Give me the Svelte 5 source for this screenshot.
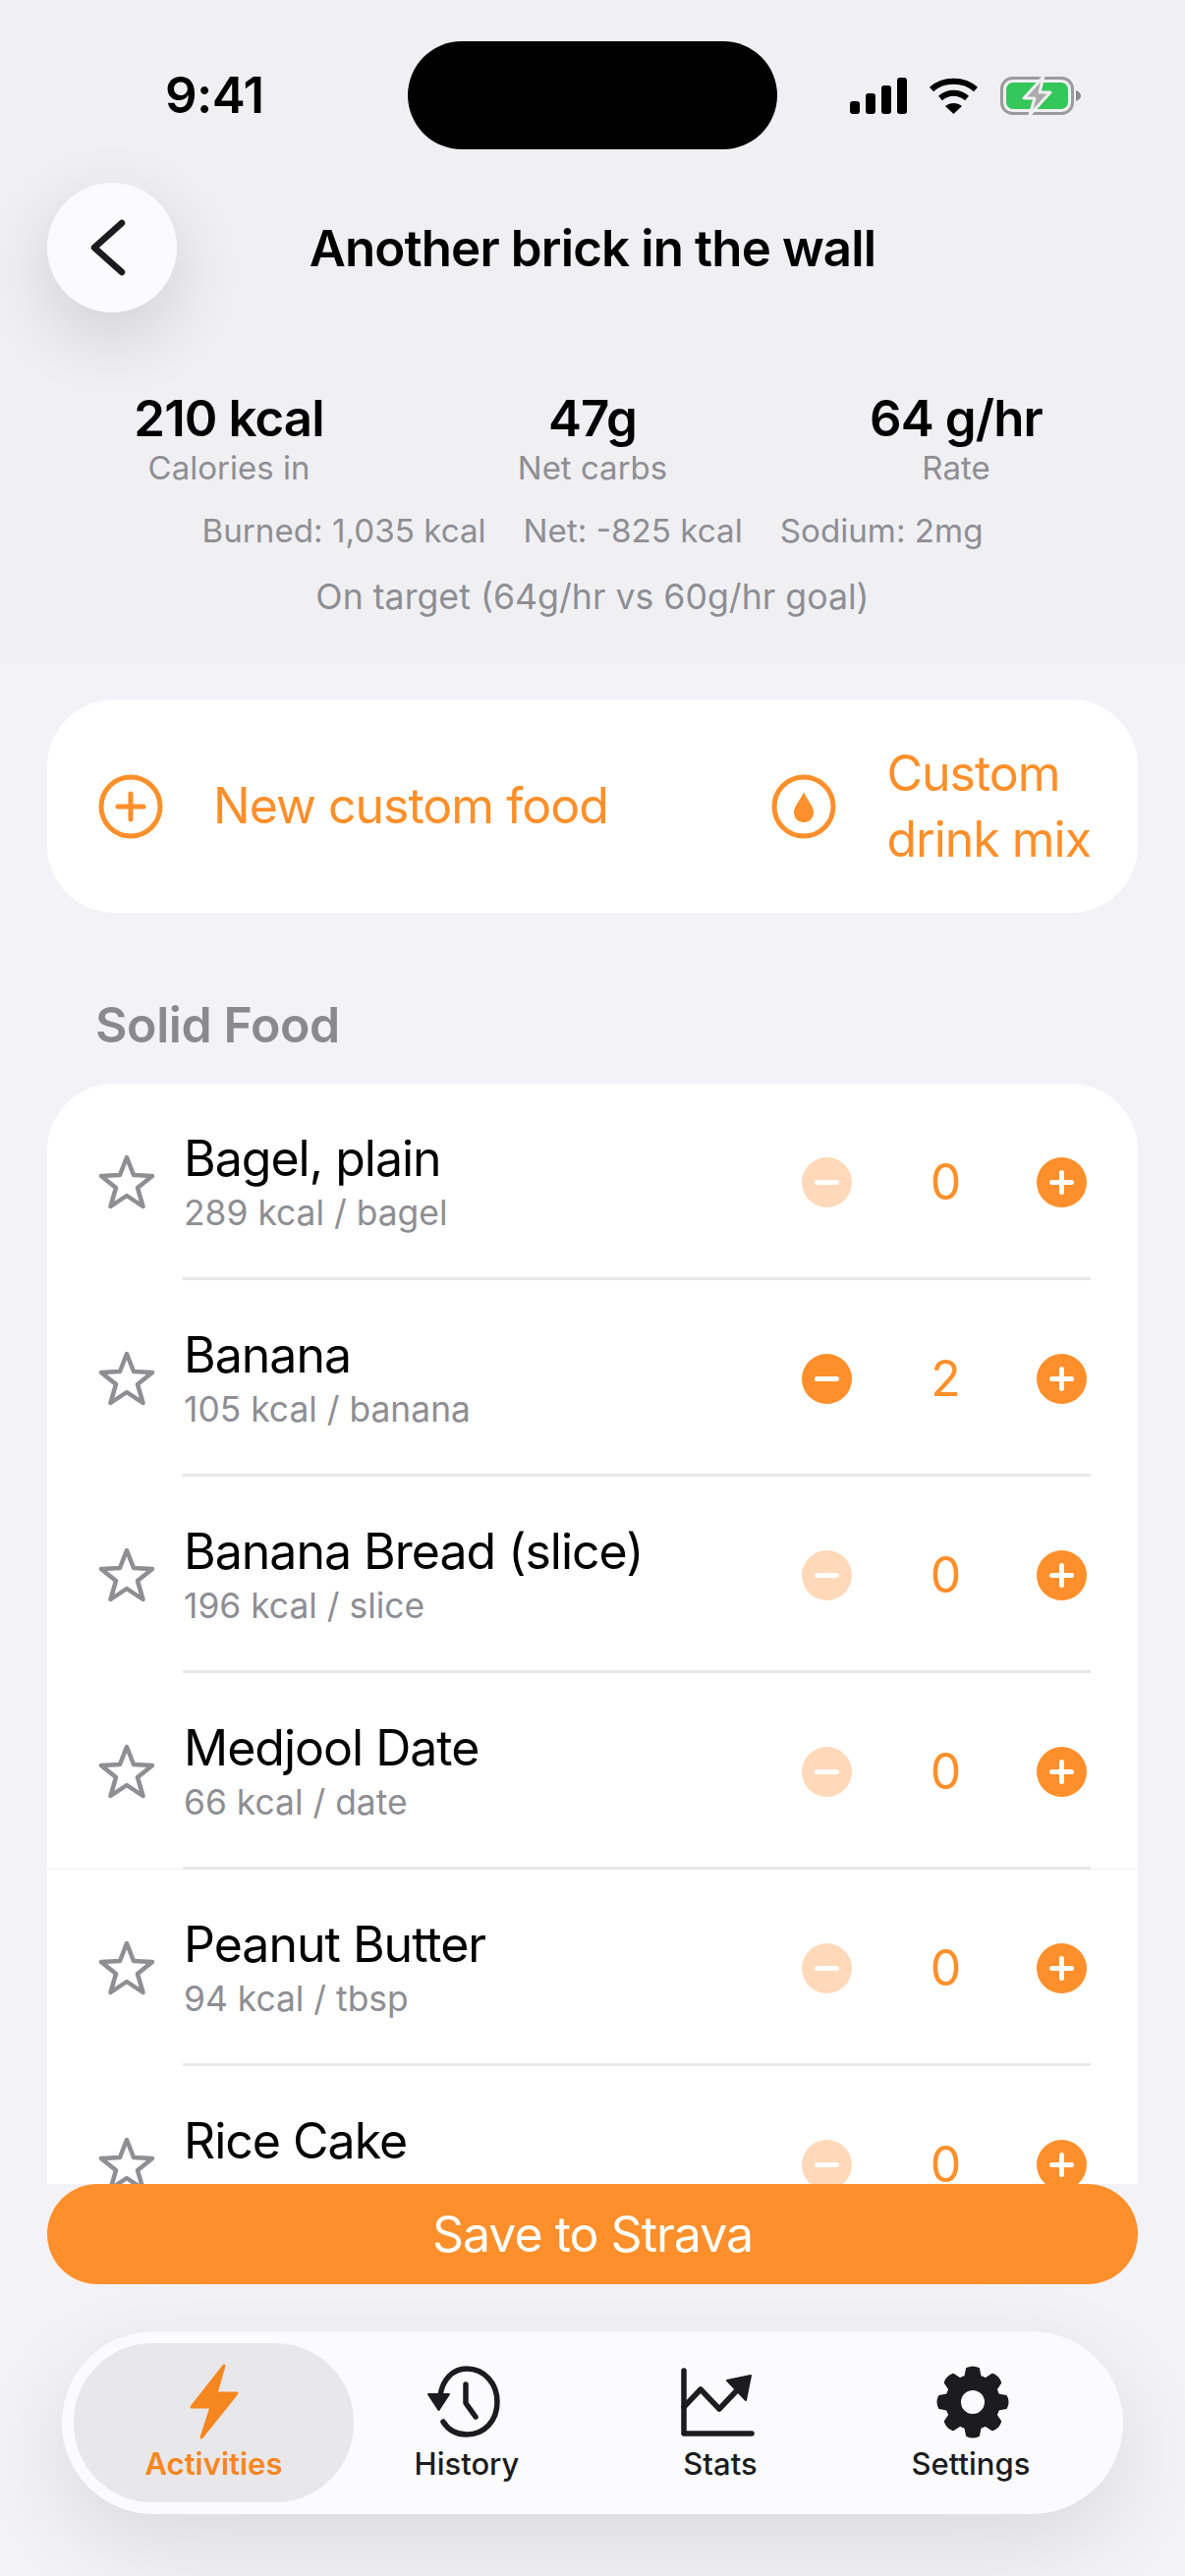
<script>
	const stats = [
		{ value: '210 kcal', label: 'Calories in' },
		{ value: '47g', label: 'Net carbs' },
		{ value: '64 g/hr', label: 'Rate' }
	];
	// the last row's second line sits behind the save button, so it has none
	const foods = [
		{ name: 'Bagel, plain', sub: '289 kcal / bagel', count: 0 },
		{ name: 'Banana', sub: '105 kcal / banana', count: 2 },
		{ name: 'Banana Bread (slice)', sub: '196 kcal / slice', count: 0 },
		{ name: 'Medjool Date', sub: '66 kcal / date', count: 0 },
		{ name: 'Peanut Butter', sub: '94 kcal / tbsp', count: 0 },
		{ name: 'Rice Cake', sub: '', count: 0 }
	];
	const tabs = ['Activities', 'History', 'Stats', 'Settings'];
	const teeth = [0, 45, 90, 135, 180, 225, 270, 315];
</script>

<div class="page">
	<header class="top">
		<div class="status">
			<span class="time">9:41</span>
			<div class="island"></div>
			<div class="status-icons">
				<svg width="58" height="37" viewBox="0 0 58 37" fill="#000">
					<rect x="0" y="24" width="10" height="13" rx="3" />
					<rect x="16" y="16" width="10" height="21" rx="3" />
					<rect x="32" y="8" width="10" height="29" rx="3" />
					<rect x="48" y="0" width="10" height="37" rx="3" />
				</svg>
				<svg class="wifi" width="51" height="37" viewBox="0 0 51 37" fill="none" stroke="#000" stroke-width="6">
					<path d="M3 12 C15 1 36 1 48 12" />
					<path d="M12 21 C20 14 31 14 39 21" />
					<path d="M25.5 37 L17 29 C22 25 29 25 34 29 Z" fill="#000" stroke="none" />
				</svg>
				<svg class="battery" width="82" height="39" viewBox="0 0 82 39">
					<rect x="1.5" y="1.5" width="72" height="36" rx="11" fill="none" stroke="#9b9b9d" stroke-width="3" />
					<rect x="6" y="6" width="63" height="27" rx="7" fill="#34c759" />
					<path d="M77 14 C80 15 82 17 82 19.5 C82 22 80 24 77 25 Z" fill="#8b8b8d" />
					<path d="M44 0 L24 22 H35 L30 39 L51 16 H40 Z" fill="#ababad" stroke="#f0f0f3" stroke-width="3" stroke-linejoin="round" />
				</svg>
			</div>
		</div>

		<div class="nav">
			<button class="back" aria-label="Back">
				<svg width="40" height="60" viewBox="0 0 40 60" fill="none" stroke="#1c1c1e" stroke-width="6.500" stroke-linecap="round" stroke-linejoin="round">
					<path d="M34 5 L6 30 L34 55" />
				</svg>
			</button>
			<h1>Another brick in the wall</h1>
		</div>

		<div class="stats">
			{#each stats as s}
				<div class="stat">
					<div class="value">{s.value}</div>
					<div class="label">{s.label}</div>
				</div>
			{/each}
		</div>
		<div class="meta">
			<span>Burned: 1,035 kcal</span>
			<span>Net: -825 kcal</span>
			<span>Sodium: 2mg</span>
		</div>
		<div class="target">On target (64g/hr vs 60g/hr goal)</div>
	</header>

	<section class="actions">
		<div class="action">
			<svg width="66" height="66" viewBox="0 0 66 66" fill="none" stroke="#ff8f2a" stroke-width="5" stroke-linecap="round">
				<circle cx="33" cy="33" r="30" />
				<path d="M33 20 V46 M20 33 H46" />
			</svg>
			<span>New custom food</span>
		</div>
		<div class="action">
			<svg width="66" height="66" viewBox="0 0 66 66" fill="none" stroke="#ff8f2a" stroke-width="5">
				<circle cx="33" cy="33" r="30" />
				<path d="M33 18 C36 26 43 32 43 39 C43 45 38.500 49 33 49 C27.500 49 23 45 23 39 C23 32 30 26 33 18 Z" fill="#ff8f2a" stroke="none" />
			</svg>
			<span>Custom<br />drink mix</span>
		</div>
	</section>

	<h2>Solid Food</h2>

	<section class="list">
		{#each foods as f, i}
			<div class="row" class:seam={i === 3}>
				<svg class="star" width="58" height="56" viewBox="0 0 58 56" fill="none" stroke="#8e8e93" stroke-width="4.500" stroke-linejoin="round">
					<path d="M29 3 L36 21 L55 22 L40 34 L45.500 53 L29 42 L12.500 53 L18 34 L3 22 L22 21 Z" />
				</svg>
				<div class="info">
					<div class="name">{f.name}</div>
					<div class="sub">{f.sub}</div>
				</div>
				<div class="stepper">
					<span class="round" class:dim={f.count === 0}><i class="bar"></i></span>
					<span class="count">{f.count}</span>
					<span class="round"><i class="bar"></i><i class="bar upright"></i></span>
				</div>
			</div>
		{/each}
	</section>

	<button class="save">Save to Strava</button>

	<nav class="tabbar">
		{#each tabs as t, i}
			<div class="tab" class:active={i === 0}>
				{#if i === 0}
					<svg width="50" height="78" viewBox="0 0 50 78">
						<path d="M35 2 L2 44 H22 L12 75 L48 30 H27 Z" fill="#f6861f" stroke="#f6861f" stroke-width="3" stroke-linejoin="round" />
					</svg>
				{:else if i === 1}
					<svg width="78" height="78" viewBox="5 0 78 78" fill="none" stroke="#1c1c1e" stroke-width="5.500" stroke-linecap="round" stroke-linejoin="round">
						<path d="M17 33 C19 16 30 5 44 5 C62 5 75 20 75 39 C75 58 62 72 44 72 C33 72 25 67 20 59" />
						<path d="M43 21 V40 L53 54" />
						<path d="M5 31 H26 L15.500 47 Z" fill="#1c1c1e" stroke-width="2" />
					</svg>
				{:else if i === 2}
					<svg width="78" height="78" viewBox="3 2 78 78" fill="none" stroke="#1c1c1e" stroke-width="5.500" stroke-linecap="round" stroke-linejoin="round">
						<path d="M5 9 V73 H74" />
						<path d="M5 46 L22 28 L41 48 L60 28" />
						<path d="M49 19 L73 14 L68 39 Z" fill="#1c1c1e" stroke-width="2" />
					</svg>
				{:else}
					<svg width="78" height="78" viewBox="-41 -39 78 78">
						{#each teeth as a}
							<path d="M-8 -24 L-6 -34 Q0 -37 6 -34 L8 -24 Z" fill="#1c1c1e" stroke="#1c1c1e" stroke-width="2" stroke-linejoin="round" transform="rotate({a})" />
						{/each}
						<circle r="20" fill="none" stroke="#1c1c1e" stroke-width="16" />
					</svg>
				{/if}
				<span>{t}</span>
			</div>
		{/each}
	</nav>
</div>

<style>
	:global(body) {
		margin: 0;
		background: #f2f2f7;
	}
	.page {
		width: 1206px;
		height: 2622px;
		overflow: hidden;
		position: relative;
		background: #f2f2f7;
		font-family: Inter, 'Liberation Sans', sans-serif;
		color: #000;
	}
	.top {
		height: 676px;
		box-sizing: border-box;
		background: #f0f0f3;
		display: flex;
		flex-direction: column;
		align-items: center;
	}
	.status {
		width: 100%;
		height: 186px;
		position: relative;
		flex: none;
	}
	.time {
		position: absolute;
		left: 168px;
		top: 68px;
		font-size: 51px;
		font-weight: 600;
		line-height: 58px;
		letter-spacing: -0.6px;
	}
	.island {
		position: absolute;
		left: 415px;
		top: 42px;
		width: 376px;
		height: 110px;
		background: #000;
		border-radius: 55px;
	}
	.status-icons {
		position: absolute;
		left: 865px;
		top: 78px;
		display: flex;
		align-items: center;
		gap: 22px;
	}
	.nav {
		width: 100%;
		box-sizing: border-box;
		padding: 0 48px;
		height: 132px;
		display: grid;
		grid-template-columns: 132px 1fr 132px;
		align-items: center;
	}
	.back {
		width: 132px;
		height: 132px;
		border: 0;
		padding: 0 9px 0 0;
		border-radius: 50%;
		background: #fbfbfd;
		box-shadow: 0 24px 70px rgba(0, 0, 0, 0.14);
		display: flex;
		align-items: center;
		justify-content: center;
	}
	h1 {
		margin: 0;
		text-align: center;
		font-size: 51px;
		font-weight: 600;
		letter-spacing: -0.85px;
	}
	.stats {
		width: 1110px;
		margin-top: 78px;
		display: grid;
		grid-template-columns: repeat(3, 1fr);
	}
	.stat {
		text-align: center;
	}
	.value {
		font-size: 51px;
		font-weight: 600;
		line-height: 60px;
		letter-spacing: -0.9px;
	}
	.label {
		font-size: 33px;
		line-height: 40px;
		color: #8e8e93;
	}
	.meta {
		margin-top: 24px;
		display: flex;
		gap: 38px;
		font-size: 33.2px;
		line-height: 40px;
		color: #8e8e93;
	}
	.target {
		margin-top: 27px;
		font-size: 35.7px;
		line-height: 40px;
		color: #8e8e93;
	}
	.actions {
		margin: 36px 48px 0;
		height: 217px;
		background: #fff;
		border-radius: 68px;
		display: flex;
		align-items: center;
		justify-content: space-between;
		padding: 0 48px 0 52px;
		color: #ff8f2a;
		font-size: 50px;
		line-height: 67px;
		letter-spacing: -1px;
	}
	.action {
		display: flex;
		align-items: center;
		gap: 51px;
	}
	h2 {
		margin: 0;
		padding: 84px 0 0 97px;
		height: 90px;
		font-size: 50px;
		line-height: 60px;
		font-weight: 600;
		letter-spacing: -0.4px;
		color: #8a8a8e;
	}
	.list {
		margin: 0 48px;
		height: 1120px;
		overflow: hidden;
		background: #fff;
		border-radius: 68px 68px 0 0;
	}
	.row {
		height: 200px;
		box-sizing: border-box;
		display: flex;
		align-items: center;
		position: relative;
		padding: 0 52px 0 52px;
	}
	.row:not(:last-child)::after {
		content: '';
		position: absolute;
		left: 138px;
		right: 48px;
		bottom: 0;
		height: 3px;
		background: #e8e8ea;
	}
	.row.seam::before {
		content: '';
		position: absolute;
		left: 0;
		right: 0;
		bottom: 0;
		height: 1px;
		background: #f1f1f3;
	}
	.star {
		flex: none;
	}
	.info {
		margin-left: 29px;
		flex: 1;
	}
	.name {
		font-size: 50px;
		line-height: 60px;
		letter-spacing: -1px;
		margin-top: -2px;
	}
	.sub {
		font-size: 35.4px;
		line-height: 40px;
		min-height: 40px;
		margin-top: 6px;
		color: #8e8e93;
	}
	.stepper {
		display: grid;
		grid-template-columns: 51px 188px 51px;
		width: 290px;
		align-items: center;
		justify-items: center;
	}
	.round {
		width: 51px;
		height: 51px;
		border-radius: 50%;
		background: #ff8f2a;
		position: relative;
	}
	.round.dim {
		background: #ffd9b9;
	}
	.bar {
		position: absolute;
		left: 13px;
		top: 23px;
		width: 25px;
		height: 5px;
		border-radius: 3px;
		background: #fff;
	}
	.bar.upright {
		transform: rotate(90deg);
	}
	.count {
		padding-left: 3px;
		font-size: 50px;
		line-height: 60px;
		color: #ff8f2a;
	}
	.save {
		display: block;
		width: 1110px;
		height: 102px;
		margin: 0 48px;
		border: 0;
		border-radius: 51px;
		background: #ff8f2a;
		color: #fff;
		font-family: inherit;
		font-size: 50px;
		letter-spacing: -1px;
		padding: 0;
		position: relative;
	}
	.tabbar {
		margin: 48px 63px 0;
		width: 1080px;
		height: 186px;
		box-sizing: border-box;
		padding: 12px;
		border-radius: 93px;
		background: #fbfbfd;
		box-shadow: 0 30px 90px rgba(0, 0, 0, 0.1);
		display: grid;
		grid-template-columns: 285px 230px 286px 224px;
	}
	.tab {
		display: flex;
		flex-direction: column;
		align-items: center;
		padding-top: 21px;
		border-radius: 80px;
		color: #1c1c1e;
		font-size: 31px;
		font-weight: 500;
	}
	.tab svg {
		height: 78px;
		flex: none;
		overflow: visible;
	}
	.tab span {
		line-height: 40px;
		margin-top: 4px;
	}
	.tab.active {
		background: #e8e8ea;
		color: #f6861f;
		font-weight: 600;
	}
</style>
